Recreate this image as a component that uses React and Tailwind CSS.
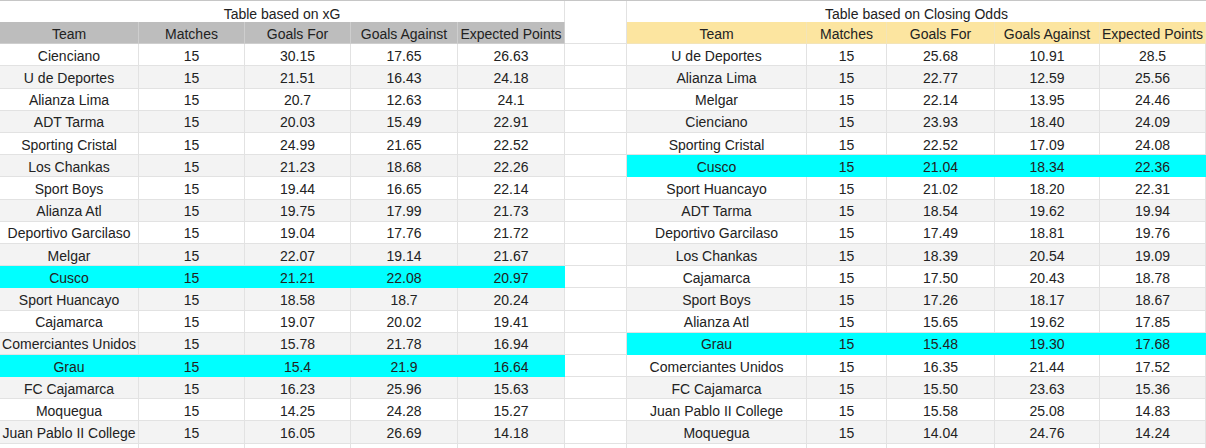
import React from "react";

// columnas: tabla xG | separador | tabla cuotas de cierre
const COLS =
  "grid grid-cols-[139px_106px_106px_107px_107px_62px_180px_80px_108px_105px_106px]";

const HEADERS = ["Team", "Matches", "Goals For", "Goals Against", "Expected Points"];

const xg = [
  ["Cienciano", "15", "30.15", "17.65", "26.63"],
  ["U de Deportes", "15", "21.51", "16.43", "24.18"],
  ["Alianza Lima", "15", "20.7", "12.63", "24.1"],
  ["ADT Tarma", "15", "20.03", "15.49", "22.91"],
  ["Sporting Cristal", "15", "24.99", "21.65", "22.52"],
  ["Los Chankas", "15", "21.23", "18.68", "22.26"],
  ["Sport Boys", "15", "19.44", "16.65", "22.14"],
  ["Alianza Atl", "15", "19.75", "17.99", "21.73"],
  ["Deportivo Garcilaso", "15", "19.04", "17.76", "21.72"],
  ["Melgar", "15", "22.07", "19.14", "21.67"],
  ["Cusco", "15", "21.21", "22.08", "20.97", true],
  ["Sport Huancayo", "15", "18.58", "18.7", "20.24"],
  ["Cajamarca", "15", "19.07", "20.02", "19.41"],
  ["Comerciantes Unidos", "15", "15.78", "21.78", "16.94"],
  ["Grau", "15", "15.4", "21.9", "16.64", true],
  ["FC Cajamarca", "15", "16.23", "25.96", "15.63"],
  ["Moquegua", "15", "14.25", "24.28", "15.27"],
  ["Juan Pablo II College", "15", "16.05", "26.69", "14.18"],
];

const odds = [
  ["U de Deportes", "15", "25.68", "10.91", "28.5"],
  ["Alianza Lima", "15", "22.77", "12.59", "25.56"],
  ["Melgar", "15", "22.14", "13.95", "24.46"],
  ["Cienciano", "15", "23.93", "18.40", "24.09"],
  ["Sporting Cristal", "15", "22.52", "17.09", "24.08"],
  ["Cusco", "15", "21.04", "18.34", "22.36", true],
  ["Sport Huancayo", "15", "21.02", "18.20", "22.31"],
  ["ADT Tarma", "15", "18.54", "19.62", "19.94"],
  ["Deportivo Garcilaso", "15", "17.49", "18.81", "19.76"],
  ["Los Chankas", "15", "18.39", "20.54", "19.09"],
  ["Cajamarca", "15", "17.50", "20.43", "18.78"],
  ["Sport Boys", "15", "17.26", "18.17", "18.67"],
  ["Alianza Atl", "15", "15.65", "19.62", "17.85"],
  ["Grau", "15", "15.48", "19.30", "17.68", true],
  ["Comerciantes Unidos", "15", "16.35", "21.44", "17.52"],
  ["FC Cajamarca", "15", "15.50", "23.63", "15.36"],
  ["Juan Pablo II College", "15", "15.58", "25.08", "14.83"],
  ["Moquegua", "15", "14.04", "24.76", "14.24"],
];

function Cell({ children, hl, gray }) {
  const color = hl
    ? "bg-[#00ffff] border-[#00ffff]"
    : gray
    ? "bg-[#f3f3f3] border-[#e2e2e2]"
    : "bg-white border-[#e2e2e2]";
  return (
    <div
      className={`${color} border-r border-b pt-[3px] flex items-center justify-center overflow-hidden whitespace-nowrap`}
    >
      {children}
    </div>
  );
}

function DataRow({ left, right, index }) {
  const gray = index % 2 === 1;
  const l = left || [];
  const r = right || [];
  return (
    <div className={`${COLS} h-[22.2px]`}>
      {[0, 1, 2, 3, 4].map((i) => (
        <Cell key={"l" + i} hl={l[5]} gray={gray}>
          {l[i]}
        </Cell>
      ))}
      <Cell />
      {[0, 1, 2, 3, 4].map((i) => (
        <Cell key={"r" + i} hl={r[5]} gray={gray}>
          {r[i]}
        </Cell>
      ))}
    </div>
  );
}

export default function App() {
  return (
    <div className="w-[1206px] h-[448px] overflow-hidden bg-white text-[14px] text-[#222] font-['Liberation_Sans',Arial,sans-serif] border-t border-[#c6c6c6]">
      {/* titulos */}
      <div className={`${COLS} h-[21px]`}>
        <div className="col-span-5 border-r border-b border-[#e2e2e2] pt-[3px] flex items-center justify-center">
          Table based on xG
        </div>
        <div className="border-r border-b border-[#e2e2e2]" />
        <div className="col-span-5 border-b border-[#e2e2e2] pt-[3px] flex items-center justify-center">
          Table based on Closing Odds
        </div>
      </div>

      {/* encabezados */}
      <div className={`${COLS} h-[22.3px]`}>
        {HEADERS.map((h) => (
          <div
            key={"hl" + h}
            className="bg-[#bdbdbd] border-r border-b border-[#cecece] pt-[3px] flex items-center justify-center whitespace-nowrap overflow-hidden"
          >
            {h}
          </div>
        ))}
        <div className="bg-white border-r border-b border-[#e2e2e2]" />
        {HEADERS.map((h) => (
          <div
            key={"hr" + h}
            className="bg-[#fce5a0] border-r border-b border-[#f3e4b8] pt-[3px] flex items-center justify-center whitespace-nowrap overflow-hidden"
          >
            {h}
          </div>
        ))}
      </div>

      {/* filas */}
      {xg.map((row, i) => (
        <DataRow key={i} left={row} right={odds[i]} index={i} />
      ))}
      <DataRow index={18} />
    </div>
  );
}
